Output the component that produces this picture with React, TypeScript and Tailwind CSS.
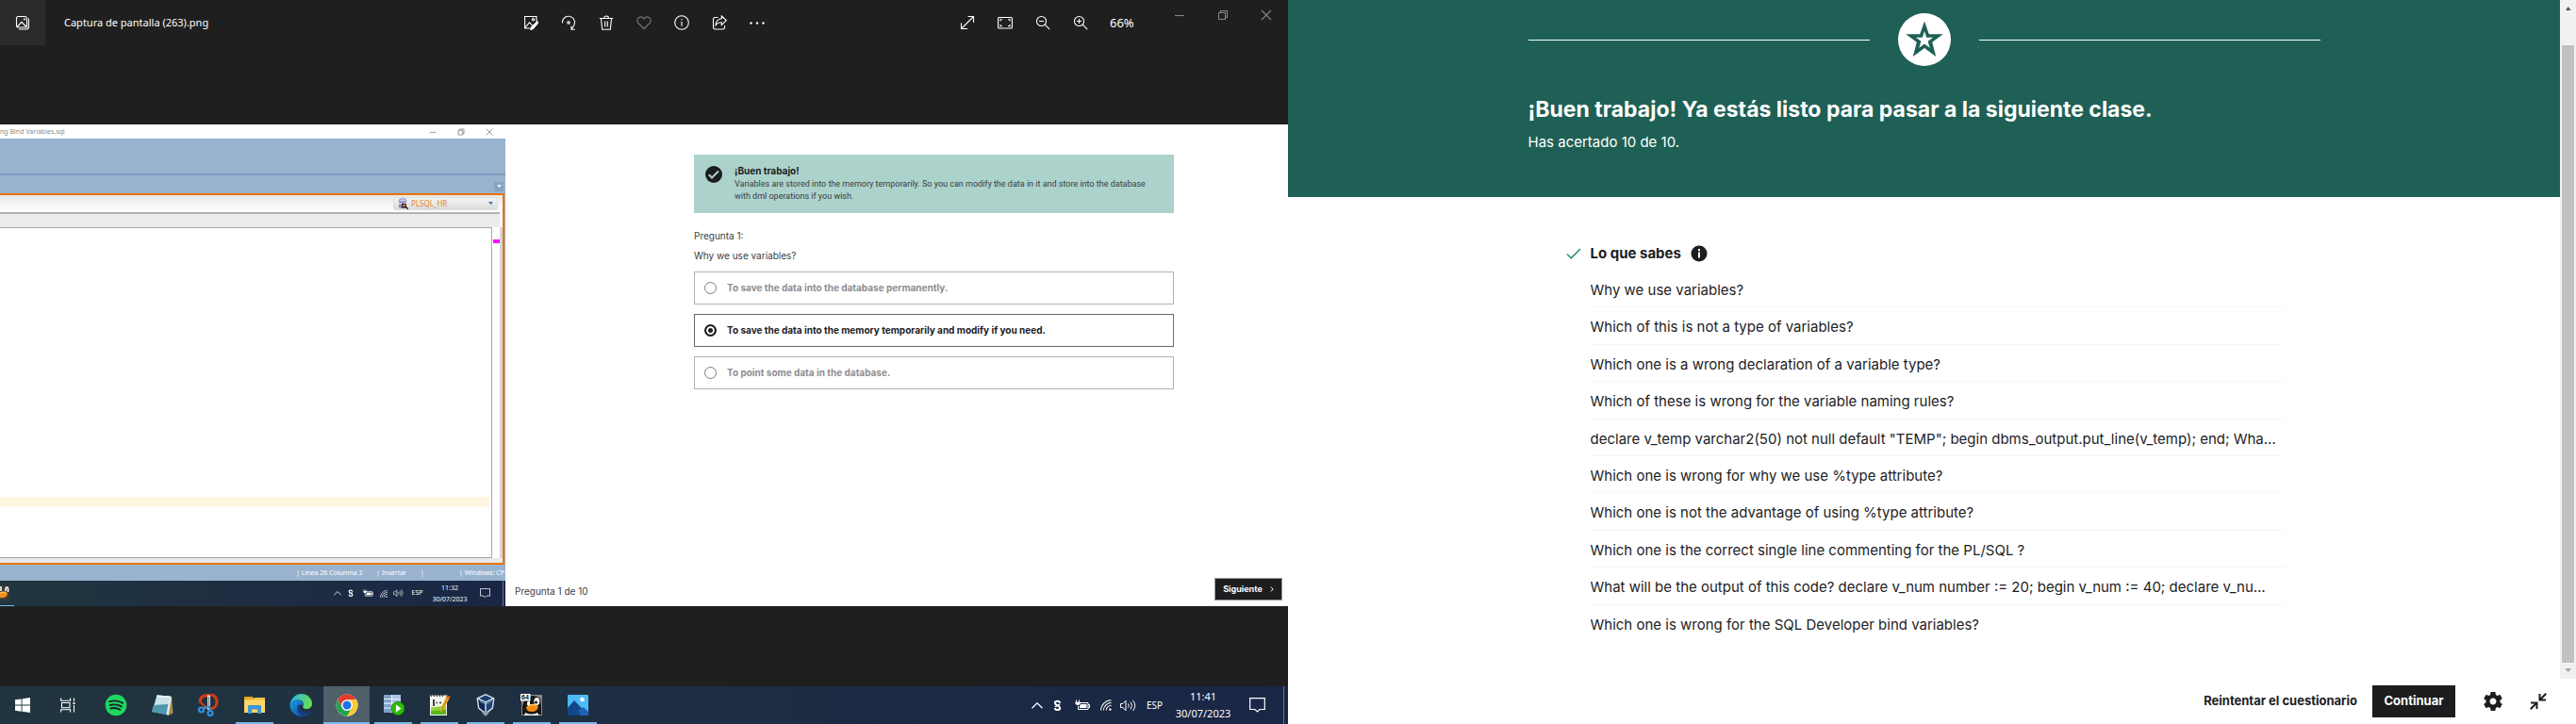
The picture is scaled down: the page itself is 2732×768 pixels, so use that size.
import type { ReactNode } from 'react';

const SYSTEM = "font-['Noto_Sans','Open_Sans',sans-serif]";

/* ---------- Photo viewer toolbar ---------- */

function Glyph({ children, className = '' }: { children: ReactNode; className?: string }) {
  return (
    <svg viewBox="0 0 16 16" className={`size-4 ${className}`} fill="none" stroke="currentColor" strokeWidth="1.1" aria-hidden="true">
      {children}
    </svg>
  );
}

const editTools: { label: string; dim?: boolean; art: ReactNode }[] = [
  {
    label: 'Editar imagen',
    art: (
      <>
        <path d="M7 14H1.6V1.5H14V7M1.8 13.5L6.5 7.8l3 3" />
        <circle cx="10.5" cy="4.8" r="1.2" />
        <path d="M14.9 6.8l1 1.2-5.6 6.6-2.5.9.5-2.5z" fill="currentColor" />
      </>
    ),
  },
  {
    label: 'Girar',
    art: (
      <>
        <path d="M1.5 8.5A6.5 6.5 0 0 1 14.5 7c0 4-1.5 6-3.5 8M11 11.5V15.3h3.8" />
        <rect x="7" y="7" width="2" height="2" />
      </>
    ),
  },
  {
    label: 'Eliminar',
    art: <path d="M.8 3.5h14.4M5.5 3.3C5.5.2 10.5.2 10.5 3.3M2.5 3.7l1.2 11.6h8.6l1.2-11.6M6.7 6.5v6M9.3 6.5v6" />,
  },
  {
    label: 'Favorito',
    dim: true,
    art: <path d="M8 14.5L1.6 8.2C-.8 4.5 3 .8 6.2 2.3L8 4l1.8-1.7c3.2-1.5 7 2.2 4.6 5.9z" />,
  },
  {
    label: 'Información',
    art: (
      <>
        <circle cx="8" cy="8" r="7.3" />
        <path d="M8 6.7v5M8 4v1.3" />
      </>
    ),
  },
  {
    label: 'Compartir',
    art: (
      <>
        <path d="M6.5 2.5H3.3A1.8 1.8 0 0 0 1.5 4.3v8.9A1.8 1.8 0 0 0 3.3 15h8.4a1.8 1.8 0 0 0 1.8-1.8V11" />
        <path d="M10.3 1l5 4.700-5 4.700V7.8C7.5 7.600 5.500 8.500 4 10.800c.2-4 2.300-6.500 6.300-7z" />
      </>
    ),
  },
  {
    label: 'Más opciones',
    art: (
      <>
        <circle cx="1.5" cy="8.5" r="1.2" fill="currentColor" stroke="none" />
        <circle cx="8" cy="8.5" r="1.2" fill="currentColor" stroke="none" />
        <circle cx="14.5" cy="8.5" r="1.2" fill="currentColor" stroke="none" />
      </>
    ),
  },
];

const zoomTools: { label: string; art: ReactNode }[] = [
  { label: 'Pantalla completa', art: <path d="M1.5 14.5l13-13M8.5 1.5h6V8M1.5 8.5v6H8" /> },
  {
    label: 'Ajustar',
    art: (
      <>
        <rect x=".6" y="2.5" width="14.8" height="11.5" rx="1" />
        <path d="M3 6.5V4.8h2M11 4.8h2v1.7M13 10v1.8h-2M5 11.8H3V10" />
      </>
    ),
  },
  {
    label: 'Alejar',
    art: (
      <>
        <circle cx="6.5" cy="6.5" r="5" />
        <path d="M10.2 10.2l5 5M4 6.5h5" />
      </>
    ),
  },
  {
    label: 'Acercar',
    art: (
      <>
        <circle cx="6.5" cy="6.5" r="5" />
        <path d="M10.2 10.2l5 5M4 6.5h5M6.5 4v5" />
      </>
    ),
  },
];

const windowButtons: { label: string; d: string }[] = [
  { label: 'Minimizar', d: 'M3 8.5h10' },
  { label: 'Restaurar', d: 'M3.5 5.5h7v7h-7zM5.5 5.5v-2h7v7h-2' },
  { label: 'Cerrar', d: 'M3 3l10 10M13 3L3 13' },
];

function ViewerBar() {
  return (
    <header className={`flex h-12 text-white ${SYSTEM}`}>
      <div className="flex flex-1 items-center">
        <button aria-label="Ver todas las fotos" className="flex size-12 items-center justify-center bg-[#2b2b2b]">
          <Glyph>
            <rect x="1.5" y="1.5" width="11" height="11.5" rx="2" />
            <path d="M14.5 3.5v8.500a3 3 0 0 1-3 3H4M2 12.500l5-5.200 5 5.200" />
            <path d="M9 3.500h1.800v1.800H9z" fill="currentColor" stroke="none" />
          </Glyph>
        </button>
        <h1 className="pl-5 text-[11px] leading-4">Captura de pantalla (263).png</h1>
      </div>
      <div className="flex items-center">
        {editTools.map((t) => (
          <button key={t.label} aria-label={t.label} className="flex h-12 w-10 items-center justify-center">
            <Glyph className={t.dim ? 'text-[#7a7a7a]' : ''}>{t.art}</Glyph>
          </button>
        ))}
      </div>
      <div className="ml-[183px] flex items-center">
        {zoomTools.map((t) => (
          <button key={t.label} aria-label={t.label} className="flex h-12 w-10 items-center justify-center">
            <Glyph>{t.art}</Glyph>
          </button>
        ))}
        <span className="w-[62px] pl-[11px] text-[13px] leading-4">66%</span>
      </div>
      <div className="flex items-start text-[#858585]">
        {windowButtons.map((b) => (
          <button key={b.label} aria-label={b.label} className="flex h-8 w-[46px] items-center justify-center">
            <Glyph>
              <path d={b.d} />
            </Glyph>
          </button>
        ))}
      </div>
    </header>
  );
}

/* ---------- System tray, shared by the desktop and the captured desktop ---------- */

function Tray({ time, small = false }: { time: string; small?: boolean }) {
  const slot = 'flex items-center justify-center';
  return (
    <div className={`flex h-full items-stretch text-white ${SYSTEM}`}>
      <div className={`${slot} ${small ? 'w-[14px]' : 'w-5'}`}>
        <svg viewBox="0 0 12 7" className={small ? 'w-2' : 'w-3'} fill="none" stroke="currentColor" strokeWidth="1.3">
          <path d="M.5 6.3L6 .8l5.5 5.5" />
        </svg>
      </div>
      <div className={`${slot} ${small ? 'w-[14px]' : 'w-[22px]'}`}>
        <svg viewBox="0 0 10 14" className={small ? 'w-[6px]' : 'w-[9px]'} fill="none">
          <path d="M8 4.2C8 1.2 2 1.2 2 4.2S8 7 8 10s-6 3-6 0" stroke="#fff" strokeWidth="2.2" />
          <path d="M2 8.8l6-3.400" stroke="#fff" strokeWidth="1.5" />
        </svg>
      </div>
      <div className={`${slot} ${small ? 'w-[22px]' : 'w-8'}`}>
        <svg viewBox="0 0 16 12" className={small ? 'w-[11px]' : 'w-4'} fill="none" stroke="currentColor">
          <path d="M4.5 3.5h9.5v7H3.5V7M14 5.500h1.500v3H14M1.500.5v2M4.500.5v2" />
          <path d="M.5 2.500h5v2L4 6H2L.5 4.500z" fill="currentColor" stroke="none" />
          <path d="M6 5h6.500v4H5V7z" fill="currentColor" stroke="none" />
        </svg>
      </div>
      <div className={`${slot} ${small ? 'w-[11px]' : 'w-[18px]'}`}>
        <svg viewBox="0 0 13 13" className={small ? 'w-2' : 'w-3'} fill="none" stroke="currentColor" strokeWidth="1.1">
          <path d="M.6 12.5A12 12 0 0 1 12.5.8M3.600 12.500a9 9 0 0 1 9-8.700M6.600 12.500a6 6 0 0 1 6-5.700" />
          <circle cx="11.3" cy="11.5" r="1.3" fill="currentColor" stroke="none" />
        </svg>
      </div>
      <div className={`${slot} ${small ? 'w-[21px]' : 'w-[29px]'}`}>
        <svg viewBox="0 0 17 13" className={small ? 'w-[11px]' : 'w-[17px]'} fill="none" stroke="currentColor">
          <path d="M.5 4.500h2.300L6 1.300v10.400L2.800 8.500H.5zM8.500 4.500q1.500 2 0 4M11 2.700q3 3.800 0 7.600M13.500 1q4.500 5.500 0 11" />
        </svg>
      </div>
      <div className={`${slot} ${small ? 'w-[19px] text-[7px]' : 'w-[27px] text-[10px]'}`}>ESP</div>
      <div className={`flex flex-col items-center justify-center ${small ? 'w-[50px] text-[7px] leading-[12px]' : 'w-[76px] text-[11px] leading-[18px]'}`}>
        <span>{time}</span>
        <span>30/07/2023</span>
      </div>
      <div className={`${slot} ${small ? 'w-6' : 'w-[38px]'}`}>
        <svg viewBox="0 0 17 16" className={small ? 'w-[11px]' : 'w-[17px]'} fill="none" stroke="currentColor" strokeWidth="1.2">
          <path d="M.7.7h15.600v11.800h-5.300L8.500 15 6 12.500H.7z" />
        </svg>
      </div>
      <div className={`border-r border-[#6b7686] ${small ? 'mr-0.5 w-2' : 'mr-1 w-[10px]'}`} />
    </div>
  );
}

/* ---------- SQL Developer capture ---------- */

function SqlDeveloper() {
  return (
    <section className="flex w-[536px] shrink-0 flex-col bg-[#99b3cf]">
      <div className={`flex h-[15px] items-center justify-between bg-white text-[#8c8c8c] ${SYSTEM}`}>
        <span className="text-[7px] leading-[15px] whitespace-nowrap">ng Bind Variables.sql</span>
        <div className="flex pr-0.5">
          {windowButtons.map((b) => (
            <button key={b.label} aria-label={`${b.label} editor`} className="flex h-[15px] w-[30px] items-center justify-center">
              <svg viewBox="2 2 12 12" className="size-2" fill="none" stroke="currentColor" strokeWidth="1.3">
                <path d={b.d} />
              </svg>
            </button>
          ))}
        </div>
      </div>
      <div className="h-[39px] border-b-2 border-[#7b98bb]" />
      <div className="flex h-[19px] items-end justify-end pr-0.5 pb-0.5">
        <button aria-label="Lista de pestañas" className="flex size-[10px] items-center justify-center rounded-xs bg-[#86a1c3]">
          <svg viewBox="0 0 6 4" className="w-[5px]" fill="#e8f0f8">
            <path d="M0 0h6L3 4z" />
          </svg>
        </button>
      </div>
      <div className="mr-px flex flex-1 flex-col border-t-2 border-r-2 border-b-2 border-[#ec7404] bg-white">
        <div className="flex h-[18px] items-center justify-end bg-linear-to-b from-[#e8e8e8] to-white pr-[5px]">
          <button className={`flex h-[14px] w-[111px] items-center rounded-xs border border-[#dedede] bg-linear-to-b from-[#f4f4f4] to-[#dcdcdc] px-1 text-[8px] leading-3 text-[#e5812b] ${SYSTEM}`}>
            <svg viewBox="0 0 11 12" className="mr-[3px] w-[11px]">
              <path d="M1 2.500v7c0 2 8 2 8 0v-7" fill="#8a88c4" />
              <ellipse cx="5" cy="2.5" rx="4" ry="1.8" fill="#c9c8ea" stroke="#6b69a6" strokeWidth=".6" />
              <path d="M1 5.500q4 2 8 0" stroke="#fff" fill="none" />
              <rect x="4" y="6" width="5" height="4.5" fill="#3a2f24" />
              <path d="M8 9l3 3" stroke="#222" strokeWidth="1.5" />
              <rect x="5.5" y="7" width="2" height="2" fill="#e5a23a" />
            </svg>
            PLSQL_HR
            <svg viewBox="0 0 6 4" className="ml-auto w-[5px]" fill="#4a78b5">
              <path d="M0 0h6L3 4z" />
            </svg>
          </button>
        </div>
        <div className="mr-[3px] h-4 border-t-2 border-[#b4b4b4] bg-[#ececec]" />
        <div className="flex flex-1 border-r-[3px] border-[#d3d6da]">
          <div className="flex flex-1 flex-col justify-end border-t border-r border-b border-[#a6a6a6] bg-white">
            <div className="mr-0.5 mb-[53px] h-[11px] bg-[#fff6e0]" />
          </div>
          <div className="w-2 bg-white pt-[13px]">
            <div className="ml-px h-1 bg-[#fb0bfb]" />
          </div>
        </div>
        <div className="h-[5px] bg-[#e9e9e9]" />
      </div>
      <div className={`flex h-[17px] items-center justify-end text-[7px] leading-[17px] whitespace-nowrap text-white ${SYSTEM}`}>
        <span className="w-[85px]">| Línea 26 Columna 2</span>
        <span className="w-[47px]">| Insertar</span>
        <span className="w-[41px]">|</span>
        <span className="pr-px">| Windows: CP</span>
      </div>
      <div className="flex h-[27px] justify-between bg-linear-to-r from-[#21353f] to-[#1a2645]">
        <div className="flex w-[15px] items-center border-b border-[#76b9ed]">
          <svg viewBox="0 0 10 16" className="w-[10px]">
            <rect width="10" height="16" fill="#3b3734" />
            <path d="M1 1v5M6 6V3q1.500-2 2.500 0v4" stroke="#fff" strokeWidth="1.6" fill="none" />
            <path d="M0 7q7-2 8 2-1 5-8 4z" fill="#f08c1e" />
            <path d="M0 8q4-1.500 6 .5" stroke="#ffd36b" fill="none" />
          </svg>
        </div>
        <Tray time="11:32" small />
      </div>
    </section>
  );
}

/* ---------- Quiz capture ---------- */

const options = [
  { id: 'permanent', text: 'To save the data into the database permanently.' },
  { id: 'temporary', text: 'To save the data into the memory temporarily and modify if you need.' },
  { id: 'point', text: 'To point some data in the database.' },
];

function Quiz() {
  return (
    <section className="flex min-w-0 flex-1 flex-col bg-white font-[Inter,sans-serif] text-[#3a3d40]">
      <div className="mr-[121px] ml-[200px] flex flex-1 flex-col pt-8">
        <div className="flex h-[62px] bg-[#acd2cc] pt-3 pl-3">
          <svg viewBox="0 0 18 18" className="mr-3 size-[18px] shrink-0" aria-hidden="true">
            <circle cx="9" cy="9" r="9" fill="#1c1d1f" />
            <path d="M3.8 9.3l3.2 3.200 7-7" stroke="#acd2cc" strokeWidth="2" fill="none" />
          </svg>
          <div className="pl-px">
            <h2 className="text-[10px] leading-[11px] font-bold text-[#1c1d1f]">¡Buen trabajo!</h2>
            <p className="pt-0.5 pr-2 font-[Roboto,sans-serif] text-[9px] leading-[13px]">
              Variables are stored into the memory temporarily. So you can modify the data in it and store into the database
              <br />
              with dml operations if you wish.
            </p>
          </div>
        </div>
        <p className="mt-[17px] text-[10px] leading-[14px]">Pregunta 1:</p>
        <fieldset className="mt-[7px]">
          <legend className="text-[10px] leading-[14px]">Why we use variables?</legend>
          <div className="flex flex-col gap-[10px] pt-[10px]">
            {options.map((o) => (
              <label
                key={o.id}
                className="flex h-[35px] items-center gap-[11px] border border-[#b3b3b3] pl-[10px] text-[10px] font-bold text-[#8e8e90] has-checked:border-[#6a6b6d] has-checked:text-[#1c1d1f]"
              >
                <input
                  type="radio"
                  name="answer"
                  defaultChecked={o.id === 'temporary'}
                  className="size-[13px] appearance-none rounded-full border border-[#77787a] bg-white checked:border-2 checked:border-[#1c1d1f] checked:bg-[#1c1d1f] checked:shadow-[inset_0_0_0_2px_white]"
                />
                {o.text}
              </label>
            ))}
          </div>
        </fieldset>
      </div>
      <footer className="flex h-8 items-center justify-between pr-[6px] pb-1 pl-[10px]">
        <span className="pt-1 text-[10px]">Pregunta 1 de 10</span>
        <button className="flex h-6 w-[72px] items-center justify-center gap-2 border border-[#9a9a9a] bg-[#1c1d1f] text-[9px] font-bold text-white">
          Siguiente
          <svg viewBox="0 0 4 6" className="h-[6px]" fill="none" stroke="currentColor">
            <path d="M.7.5L3.2 3 .7 5.5" />
          </svg>
        </button>
      </footer>
    </section>
  );
}

/* ---------- Windows taskbar ---------- */

const apps: { name: string; state?: 'open' | 'active'; art: ReactNode }[] = [
  {
    name: 'Spotify',
    art: (
      <>
        <circle cx="12" cy="12" r="11.3" fill="#1ed760" />
        <path d="M5 8.3c5-1.5 10-1 14.2 1.5M5.7 12c4.3-1.2 8.5-.7 12 1.4M6.3 15.5c3.7-1 7-.6 10 1.2" stroke="#16252b" strokeWidth="1.9" strokeLinecap="round" fill="none" />
      </>
    ),
  },
  {
    name: 'Bloc de notas',
    art: (
      <>
        <path d="M7 2l15 .5 1.5 18-5 2.500z" fill="#a88a55" />
        <path d="M6.5 1.500L20 2.500 16.500 22 1 19z" fill="#8ec3d4" />
        <path d="M6.5 1.500L20 2.500 18.500 11 4 12z" fill="#c6e3ea" />
        <path d="M4 12l14.500-1-2 11L1 19z" fill="#4f98ae" />
        <path d="M6.5 1.500L20 2.500l-.3 1.600-13.700-1z" fill="#eef7f9" />
        <path d="M20 2.500L16.500 22l2 1L22 4z" fill="#e8eef0" />
      </>
    ),
  },
  {
    name: 'Recortes',
    art: (
      <>
        <path d="M11 1.500C16-.5 21 2.500 21 8.500c0 4-3 7-7 7.500M11 2C5 1.500 2.500 5 3.500 9.500" stroke="#cf3c12" strokeWidth="3.2" fill="none" />
        <path d="M3.5 9l8.500 7.500" stroke="#cf3c12" strokeWidth="2.2" />
        <path d="M11 1l3 1v15h-3z" fill="#dde2e6" />
        <path d="M12.5 3v13" stroke="#6c757c" strokeWidth="1" />
        <path d="M7 15l6-1.500 1 4" stroke="#3292e0" strokeWidth="2" fill="none" />
        <circle cx="4.5" cy="17" r="2.5" stroke="#3292e0" strokeWidth="2.2" fill="none" />
        <circle cx="14" cy="20.5" r="2.5" stroke="#3292e0" strokeWidth="2.2" fill="none" />
      </>
    ),
  },
  {
    name: 'Explorador de archivos',
    state: 'open',
    art: (
      <>
        <path d="M1 3h9l2 2.500H1z" fill="#e8a314" />
        <path d="M1 5.500h22V20H1z" fill="#ffd766" />
        <path d="M1 5.500h9.500l2-1.500H23v3H1z" fill="#f7c649" />
        <path d="M5 21v-7.500c0-1 .6-1.500 1.500-1.500h11c1 0 1.500.5 1.500 1.500V21h-4v-4.500H9V21z" fill="#3b97dc" />
      </>
    ),
  },
  {
    name: 'Microsoft Edge',
    art: (
      <>
        <defs>
          <linearGradient id="edge-top" x1="0" x2="1" y1=".3" y2=".6">
            <stop stopColor="#2bb5e8" />
            <stop offset="1" stopColor="#6be04c" />
          </linearGradient>
          <linearGradient id="edge-base" x1="0" x2="1" y1="0" y2="1">
            <stop stopColor="#1d9be2" />
            <stop offset="1" stopColor="#0d4a9e" />
          </linearGradient>
        </defs>
        <path d="M.5 11C2 4 7 0 12.500 0 19 0 24 5 24 10.500c0 3.500-3 5.500-6 5.500s-4.500-1.500-3.500-3c1.500-3-1-6.500-5-6.500-4 0-7.500 2-9 4.500z" fill="url(#edge-top)" />
        <path d="M.5 11c1-4 5-5 8.500-4.500 4 .5 6 3 5.300 5.800C12 10 8 12.500 8.500 17c.4 4.500 5 7 9 6.500-8 2.500-17.500-3-17-12.500z" fill="url(#edge-base)" />
        <path d="M10 10.700c-4 4-2 12 5.500 12.800 3 .3 6-1.800 7.300-4.500-4 2.500-9 1.500-11-2-1.200-2-1.300-4.500-1.800-6.300z" fill="#12408a" />
      </>
    ),
  },
  {
    name: 'Google Chrome',
    state: 'active',
    art: (
      <>
        <circle cx="12" cy="12" r="11.5" fill="#fff" />
        <path d="M2 6.300a11.500 11.500 0 0 1 20 0H12a5.700 5.700 0 0 0-5 8.500z" fill="#e33b2e" />
        <path d="M22 6.300a11.500 11.500 0 0 1-10 17.200l5-8.700a5.700 5.700 0 0 0-5-8.500z" fill="#fcc934" />
        <path d="M12 23.500A11.500 11.500 0 0 1 2 6.300l5 8.600a5.700 5.700 0 0 0 10 0z" fill="#1fa24a" />
        <circle cx="12" cy="12" r="5.6" fill="#fff" />
        <circle cx="12" cy="12" r="4.5" fill="#1a73e8" />
      </>
    ),
  },
  {
    name: 'Data Modeler',
    state: 'open',
    art: (
      <>
        <path d="M2 1h18v19H2z" fill="#a9c4e4" />
        <path d="M2 1h8v19H2z" fill="#7f9fc9" />
        <path d="M2 5.500h18M2 10.200h18M2 15h18M10.500 1v19" stroke="#e8f0fa" strokeWidth="1.2" />
        <circle cx="17" cy="15.5" r="7" fill="#2ebd0b" stroke="#137a02" strokeWidth=".8" />
        <path d="M15 11.500l5.500 4-5.500 4z" fill="#fff" />
      </>
    ),
  },
  {
    name: 'Notepad++',
    state: 'open',
    art: (
      <>
        <path d="M2 1.500h18V23H2z" fill="#f4f7f0" />
        <path d="M3 14.500l16-2v9.500H3z" fill="#8fd43c" />
        <path d="M3 18.500l16-2v5.500H3z" fill="#5cb417" />
        <path d="M3.500 1v2M6.500 1v2M9.500 1v2M12.500 1v2M15.500 1v2" stroke="#444" strokeWidth="1.3" />
        <path d="M6 6v7M8.500 9.500h1.500M12 9.500h2" stroke="#222" strokeWidth="1.7" />
        <path d="M20 1.500L23.500 3 16 17l-3 2 .3-3.500z" fill="#f0b429" />
        <path d="M20 1.500L23.500 3l-1 2-3.400-1.600z" fill="#d8571e" />
        <path d="M20.500 4.500L14.500 17" stroke="#a8700d" strokeWidth=".8" />
      </>
    ),
  },
  {
    name: 'VirtualBox',
    state: 'open',
    art: (
      <>
        <path d="M12 0l9.500 4.500-1.500 11L12 22l-8-6.500L2.500 4.500z" fill="#dfe6ee" />
        <path d="M12 1.500l7 3.300-7 3.400-7-3.400z" fill="#1a3e70" />
        <path d="M4 6l7.300 3.300v10.200L5.300 14.800z" fill="#0e2a54" />
        <path d="M20 6l-7.300 3.300v10.200l6-4.700z" fill="#1b4379" />
        <path d="M6 8l5 2.500M18 8l-5 2.500" stroke="#8fb0d8" strokeWidth=".8" />
        <path d="M8 20l4 4 4-4-4-3z" fill="#8f9cab" />
      </>
    ),
  },
  {
    name: 'SQL Developer',
    state: 'open',
    art: (
      <>
        <rect x="1" y="1" width="22" height="22" fill="#8b8682" />
        <path d="M4 7q8-9 17-2l1 8v9H2V13z" fill="#191817" />
        <path d="M7 9l3-2v5H7z" fill="#fff" />
        <ellipse cx="17.3" cy="8" rx="3" ry="4" fill="#fff" />
        <circle cx="16.5" cy="9" r="1.5" fill="#111" />
        <path d="M6 14q7-5 13-1-1 6-7 6t-6-5z" fill="#f08a17" />
        <path d="M7.500 13.500q5-3.500 9.500-1" stroke="#ffd66b" strokeWidth="1.3" fill="none" />
        <path d="M5 20q7 3 13 0l2 3H4z" fill="#e9e9e9" />
        <rect x="0" y="0" width="10.5" height="7.5" fill="#fff" />
        <text x="1" y="6.3" fontSize="7" fontWeight="700" fill="#111" fontFamily="Liberation Sans, sans-serif">64</text>
      </>
    ),
  },
  {
    name: 'Fotos',
    state: 'open',
    art: (
      <>
        <rect x="1" y="1" width="22" height="22" rx="1" fill="#4cbbf7" />
        <path d="M1 15l7-8 9 9.500L21.500 23H2a1 1 0 0 1-1-1z" fill="#12458a" />
        <path d="M12 18l5.500-4 5.500 5v3a1 1 0 0 1-1 1H15z" fill="#1f62b8" />
        <circle cx="16.5" cy="6" r="2.3" fill="#fff" />
      </>
    ),
  },
];

function Taskbar() {
  return (
    <footer className="flex h-10 justify-between bg-linear-to-r from-[#21353f] to-[#1a2645] text-white">
      <div className="flex">
        <button aria-label="Inicio" className="flex w-12 items-center justify-center">
          <svg viewBox="0 0 16 16" className="size-4" fill="currentColor">
            <path d="M0 2.3l6.600-.9v6.200H0zM7.500 1.200L16 0v7.600H7.500zM0 8.500h6.600v6.200L0 13.800zM7.500 8.500H16V16l-8.500-1.200z" />
          </svg>
        </button>
        <button aria-label="Vista de tareas" className="mr-0.5 flex w-12 items-center justify-center">
          <svg viewBox="0 0 16 16" className="size-4" fill="none" stroke="currentColor" strokeWidth="1.1">
            <path d="M.6.5v2.700h10V.5M1.500 5.500h8.500v5.200H1.500zM.6 15.500v-2.700h10v2.700M14.500.5v3.500M14.500 8v7.500" />
            <path d="M13.500 5h2v2h-2z" fill="currentColor" stroke="none" />
          </svg>
        </button>
        {apps.map((a) => (
          <button key={a.name} aria-label={a.name} className={`flex w-[49px] flex-col items-center ${a.state === 'active' ? 'bg-[#506068]' : ''}`}>
            <span className="flex flex-1 items-center">
              <svg viewBox="0 0 24 24" className="mt-0.5 size-6">
                {a.art}
              </svg>
            </span>
            <span className={`h-0.5 ${a.state === 'active' ? 'w-full bg-[#76b9ed]' : a.state === 'open' ? 'w-10 bg-[#76b9ed]' : 'w-10'}`} />
          </button>
        ))}
      </div>
      <Tray time="11:41" />
    </footer>
  );
}

/* ---------- Quiz results ---------- */

const known = [
  'Why we use variables?',
  'Which of this is not a type of variables?',
  'Which one is a wrong declaration of a variable type?',
  'Which of these is wrong for the variable naming rules?',
  'declare v_temp varchar2(50) not null default "TEMP"; begin dbms_output.put_line(v_temp); end; Wha…',
  'Which one is wrong for why we use %type attribute?',
  'Which one is not the advantage of using %type attribute?',
  'Which one is the correct single line commenting for the PL/SQL ?',
  'What will be the output of this code? declare v_num number := 20; begin v_num := 40; declare v_nu…',
  'Which one is wrong for the SQL Developer bind variables?',
];

function Results() {
  return (
    <main className="flex h-screen flex-col bg-white font-[Inter,sans-serif] text-[#1c1d1f]">
      <div className="flex min-h-0 flex-1">
        <div className="min-w-0 flex-1 overflow-hidden">
          <header className="bg-[#1e6055] pt-[14px] pb-[46px] text-white">
            <div className="mx-auto w-full max-w-[840px]">
              <div className="flex items-center gap-[30px]">
                <span className="h-0.5 flex-1 border-b border-white" />
                <span className="flex size-14 items-center justify-center rounded-full bg-white">
                  <svg viewBox="0 0 40 40" className="size-10" fill="#1e6055" aria-hidden="true">
                    <path
                      fillRule="evenodd"
                      d="M20 .5l4.800 13.700H39.800L28.200 22.800 32.200 38 20 29 7.800 38l4-15.200L.2 14.200h15zM20 11l-2.200 6.700h-7l5.600 4.100-2.100 7L20 24.500l5.700 4.300-2.100-7 5.600-4.100h-7z"
                    />
                  </svg>
                </span>
                <span className="h-0.5 flex-1 border-b border-white" />
              </div>
              <h2 className="mt-8 text-[23px] leading-7 font-bold">¡Buen trabajo! Ya estás listo para pasar a la siguiente clase.</h2>
              <p className="mt-[9px] text-[15px] leading-6">Has acertado 10 de 10.</p>
            </div>
          </header>
          <section className="mx-auto w-full max-w-[840px] pt-12 pr-[38px] pl-10">
            <div className="flex h-6 items-center gap-[10px]">
              <svg viewBox="0 0 16 12" className="w-4" fill="none" stroke="#2f8f7e" strokeWidth="1.6" aria-hidden="true">
                <path d="M1 6.500l4.300 4.300L15 1" />
              </svg>
              <h3 className="text-[15px] leading-6 font-bold">Lo que sabes</h3>
              <button aria-label="Más información">
                <svg viewBox="0 0 18 18" className="block size-[18px]">
                  <circle cx="9" cy="9" r="8.5" fill="#1c1d1f" />
                  <path d="M9 4v2.200M9 7.500v6" stroke="#fff" strokeWidth="2" />
                </svg>
              </button>
            </div>
            <ul className="mt-[6px] ml-[26px] grid h-[394px] grid-rows-10">
              {known.map((q) => (
                <li key={q} className="flex items-center border-b border-[#f5f6f7] pt-1 text-[15px] last:border-transparent">
                  <span className="truncate">{q}</span>
                </li>
              ))}
            </ul>
          </section>
        </div>
        <div className="flex w-[17px] flex-col items-center bg-[#f1f1f1]">
          <svg viewBox="0 0 17 17" className="size-[17px]" fill="#505050">
            <path d="M6 11h5.500L8.700 7z" />
          </svg>
          <div className="mt-[31px] w-[13px] flex-1 bg-[#c1c1c1]" />
          <svg viewBox="0 0 17 17" className="size-[17px]" fill="#a3a3a3">
            <path d="M5.500 6h6.500L8.700 10z" />
          </svg>
        </div>
      </div>
      <footer className="flex h-12 items-center justify-end pr-[31px] text-[13px] font-bold">
        <button>Reintentar el cuestionario</button>
        <button className="ml-4 h-[34px] w-[88px] bg-[#1c1d1f] text-white">Continuar</button>
        <button aria-label="Configuración" className="ml-[30px]">
          <svg viewBox="2 2 20 20" className="block size-5" fill="currentColor">
            <path d="M19.430 12.980c.04-.32.07-.64.07-.98s-.03-.66-.07-.98l2.110-1.650c.19-.15.24-.42.12-.64l-2-3.460c-.12-.22-.39-.3-.61-.22l-2.490 1c-.52-.4-1.080-.73-1.690-.98l-.38-2.650C14.460 2.180 14.250 2 14 2h-4c-.25 0-.46.18-.49.42l-.38 2.650c-.61.25-1.170.59-1.690.98l-2.490-1c-.23-.09-.49 0-.61.22l-2 3.460c-.13.22-.07.49.12.64l2.110 1.650c-.04.32-.07.65-.07.98s.03.66.07.98l-2.110 1.650c-.19.15-.24.42-.12.64l2 3.460c.12.22.39.3.61.22l2.490-1c.52.4 1.080.73 1.690.98l.38 2.650c.03.24.24.42.49.42h4c.25 0 .46-.18.49-.42l.38-2.650c.61-.25 1.170-.59 1.690-.98l2.490 1c.23.09.49 0 .61-.22l2-3.460c.12-.22.07-.49-.12-.64l-2.110-1.650zM12 15.500c-1.930 0-3.500-1.570-3.500-3.500s1.570-3.500 3.500-3.500 3.500 1.570 3.500 3.500-1.570 3.500-3.500 3.500z" />
          </svg>
        </button>
        <button aria-label="Salir de pantalla completa" className="ml-[29px]">
          <svg viewBox="0 0 18 18" className="block size-[18px]" fill="none" stroke="currentColor" strokeWidth="2">
            <path d="M17.300.7l-6 6M10.500 1v6.500H17M.7 17.300l6-6M1 10.500h6.500V17" />
          </svg>
        </button>
      </footer>
    </main>
  );
}

export default function App() {
  return (
    <div className="grid min-h-screen grid-cols-2 bg-white">
      <div className="flex h-screen min-w-0 flex-col bg-[#1f1f1f]">
        <ViewerBar />
        <div className="flex min-h-0 flex-1 pt-[84px] pb-[85px]">
          <SqlDeveloper />
          <Quiz />
        </div>
        <Taskbar />
      </div>
      <Results />
    </div>
  );
}
